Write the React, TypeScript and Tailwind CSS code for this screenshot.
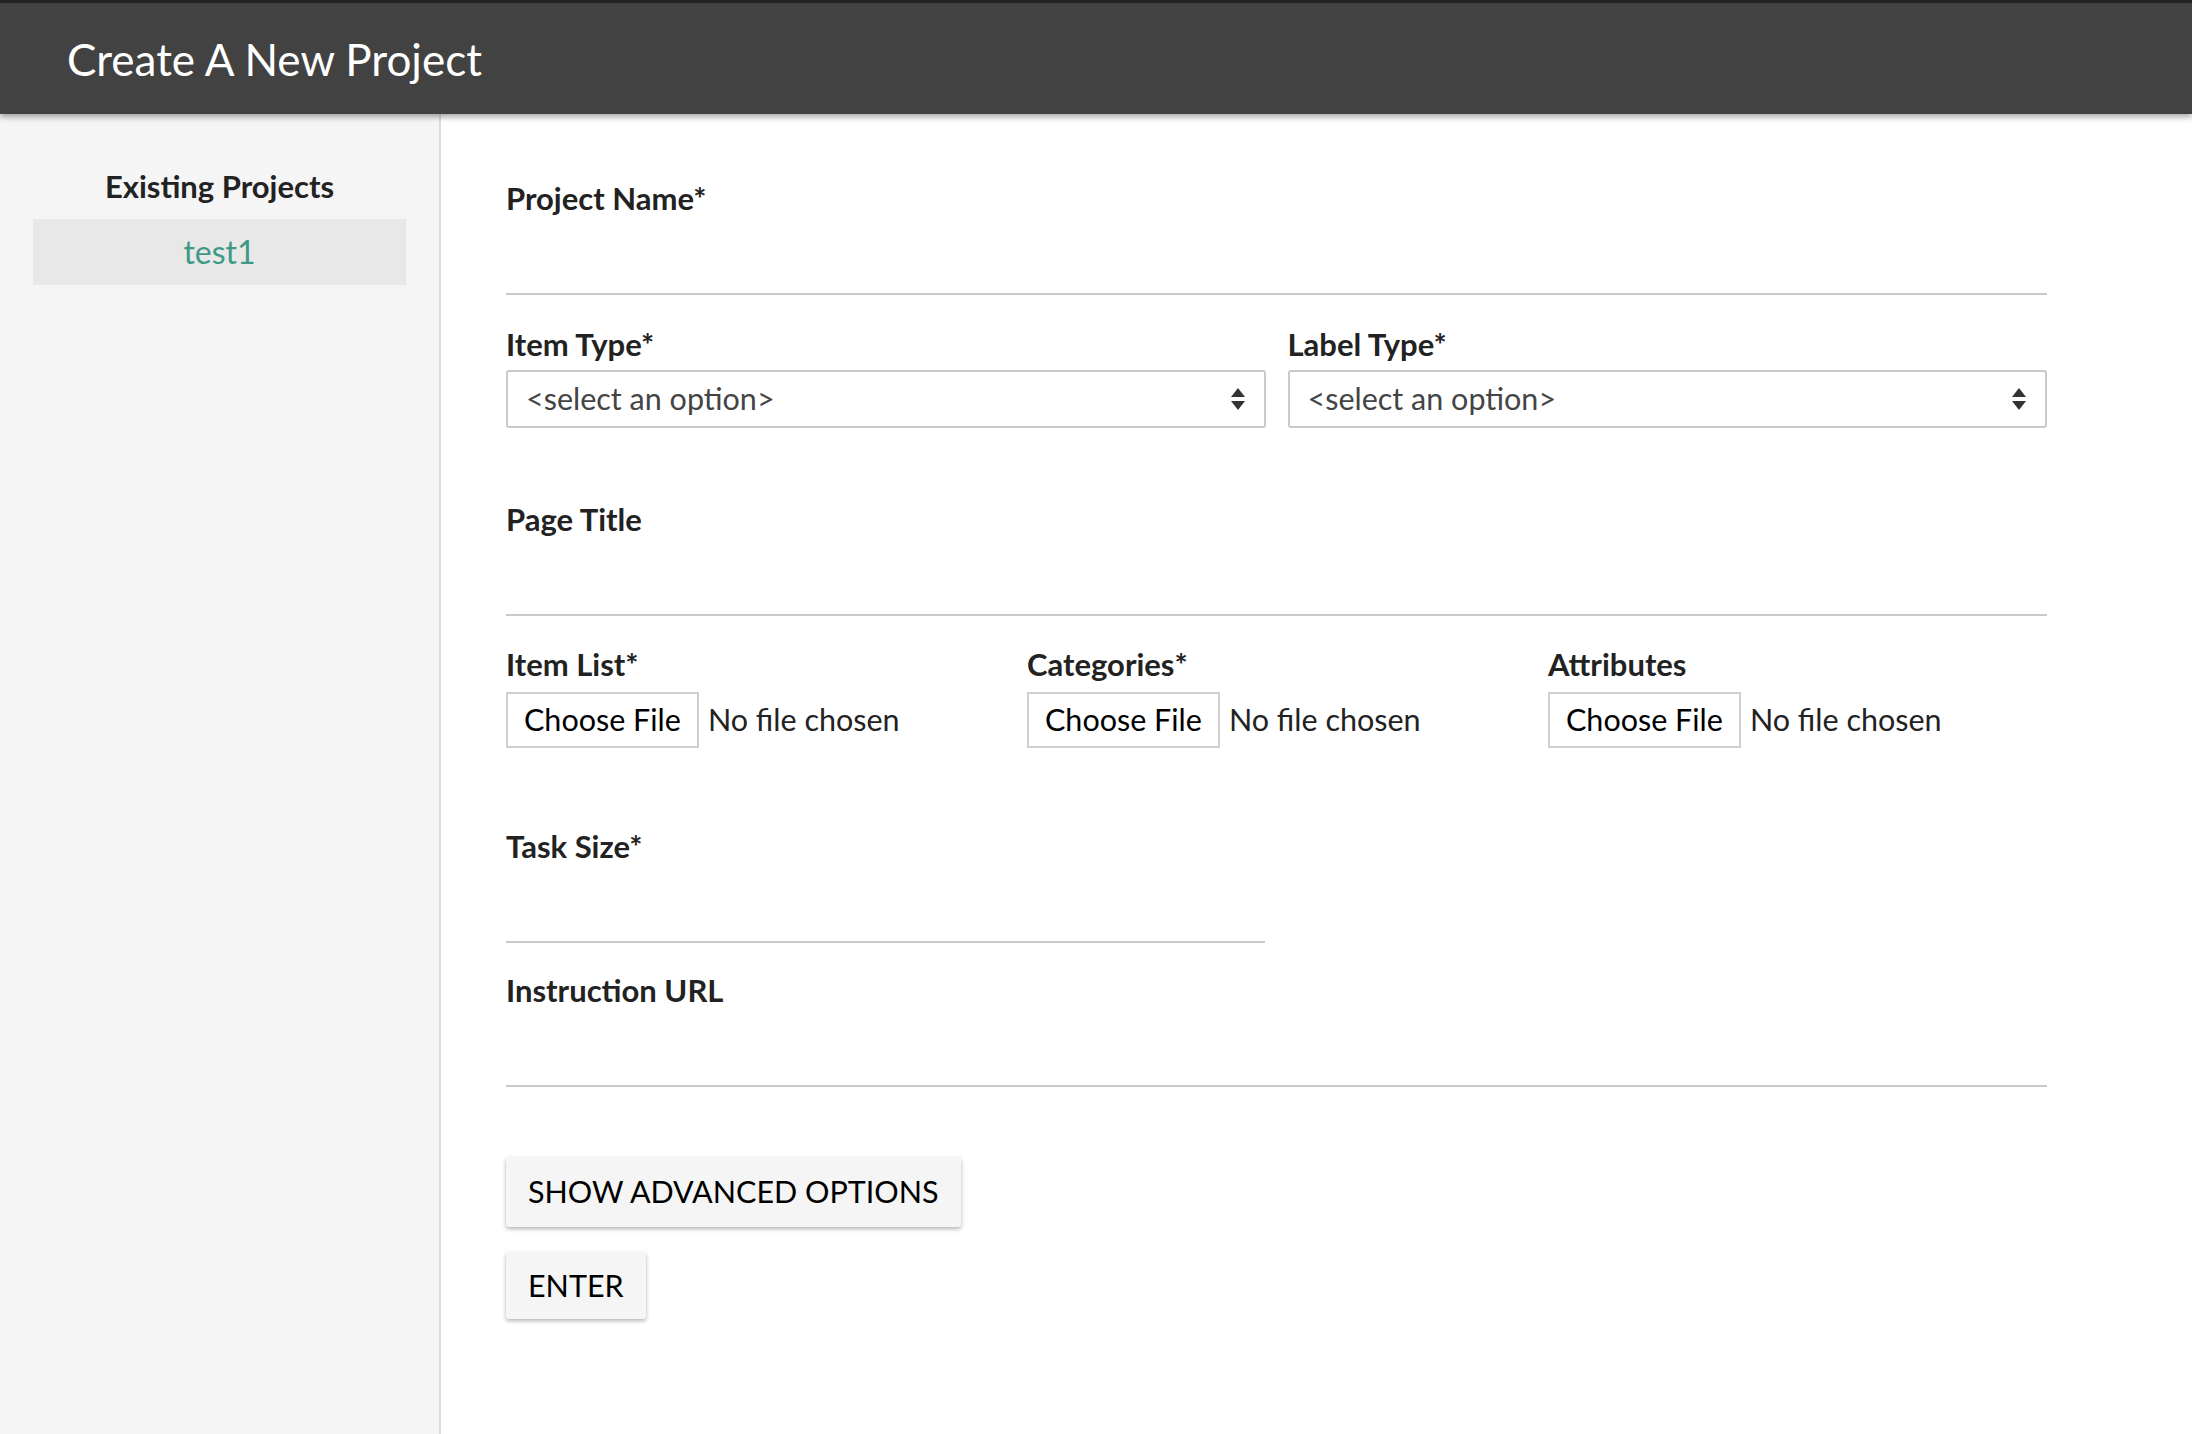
import React from "react";

const SelectArrows = () => (
  <svg width="16" height="24" viewBox="0 0 16 24" className="text-[#333]">
    <path d="M8 1 L15 10 L1 10 Z" fill="currentColor" />
    <path d="M8 23 L15 14 L1 14 Z" fill="currentColor" />
  </svg>
);

const TextField = ({ label, className = "" }: { label: string; className?: string }) => (
  <div className={className}>
    <label className="block text-[31px] leading-[36px] font-bold text-[#222]">{label}</label>
    <input
      type="text"
      className="block w-full h-[79px] bg-transparent border-b-2 border-[#c9c9c9] outline-none text-[30px]"
    />
  </div>
);

const SelectField = ({ label }: { label: string }) => (
  <div className="flex-1">
    <label className="block text-[31px] leading-[36px] font-bold text-[#222]">{label}</label>
    <div className="mt-[8px] h-[58px] border-2 border-[#c9c9c9] rounded-[3px] flex items-center justify-between pl-[18px] pr-[18px]">
      <span className="text-[30.5px] text-[#444]">&lt;select an option&gt;</span>
      <SelectArrows />
    </div>
  </div>
);

const FileField = ({ label }: { label: string }) => (
  <div>
    <label className="block text-[31px] leading-[36px] font-bold text-[#222]">{label}</label>
    <div className="mt-[10px] flex items-center">
      <div className="h-[56px] px-[16px] border-2 border-[#cfcfcf] flex items-center text-[30.5px] text-black bg-white">
        Choose File
      </div>
      <span className="ml-[9px] text-[30.5px] text-[#222]">No file chosen</span>
    </div>
  </div>
);

export default function App() {
  return (
    <div className="min-h-screen flex flex-col font-['Lato',sans-serif]">
      <header className="h-[114px] bg-[#424242] border-t-[3px] border-[#222] shadow-[0_3px_6px_rgba(0,0,0,0.35)] flex items-center px-[67px] relative z-10">
        <h1 className="text-[44px] font-normal text-white">Create A New Project</h1>
      </header>
      <div className="flex flex-1">
        <aside className="w-[441px] bg-[#f5f5f5] border-r-2 border-[#dcdcdc] px-[33px] pt-[54px]">
          <h2 className="text-center text-[31px] leading-[36px] font-bold text-[#222]">Existing Projects</h2>
          <div className="mt-[15px] h-[66px] bg-[#e8e8e8] flex items-center justify-center text-[32px] text-[#3f9a85]">
            test1
          </div>
        </aside>
        <main className="flex-1 pl-[65px] pr-[145px] pt-[66px] pb-[100px]">
          <TextField label="Project Name*" />
          <div className="mt-[31px] flex gap-[22px]">
            <SelectField label="Item Type*" />
            <SelectField label="Label Type*" />
          </div>
          <TextField label="Page Title" className="mt-[73px]" />
          <div className="mt-[30px] grid grid-cols-3 gap-[22px]">
            <FileField label="Item List*" />
            <FileField label="Categories*" />
            <FileField label="Attributes" />
          </div>
          <TextField label="Task Size*" className="mt-[80px] w-[759px]" />
          <TextField label="Instruction URL" className="mt-[29px]" />
          <div className="mt-[70px] flex flex-col items-start gap-[25px]">
            <button className="h-[70px] px-[22px] bg-[#f5f5f5] rounded-[3px] shadow-[0_2px_4px_rgba(0,0,0,0.3)] text-[30.5px] text-black uppercase">
              Show Advanced Options
            </button>
            <button className="h-[67px] px-[22px] bg-[#f5f5f5] rounded-[3px] shadow-[0_2px_4px_rgba(0,0,0,0.3)] text-[30.5px] text-black uppercase">
              Enter
            </button>
          </div>
        </main>
      </div>
    </div>
  );
}
